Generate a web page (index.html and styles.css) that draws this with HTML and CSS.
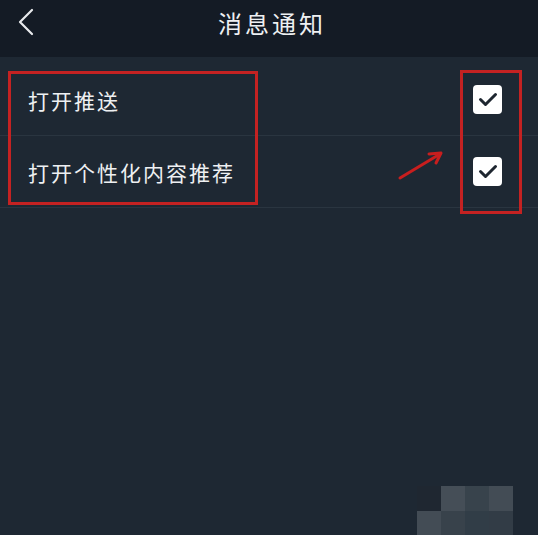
FILE: index.html
```html
<!DOCTYPE html>
<html lang="zh">
<head>
<meta charset="utf-8">
<link rel="stylesheet" href="styles.css">
</head>
<body>
<div class="screen">
  <header class="topbar">
    <svg class="back" width="20" height="30" viewBox="0 0 20 30"><path d="M16 3 L4 15 L16 27" fill="none" stroke="#e8eaec" stroke-width="2.2" stroke-linecap="round" stroke-linejoin="round"/></svg>
    <h1 class="title">消息通知</h1>
  </header>
  <main class="list">
    <div class="row">
      <span class="label">打开推送</span>
      <span class="check"><svg width="20" height="15" viewBox="0 0 20 15"><path d="M2.5 7.5 L7.5 12.5 L17.5 2.5" fill="none" stroke="#1e2630" stroke-width="3" stroke-linecap="round" stroke-linejoin="round"/></svg></span>
    </div>
    <div class="row">
      <span class="label">打开个性化内容推荐</span>
      <span class="check"><svg width="20" height="15" viewBox="0 0 20 15"><path d="M2.5 7.5 L7.5 12.5 L17.5 2.5" fill="none" stroke="#1e2630" stroke-width="3" stroke-linecap="round" stroke-linejoin="round"/></svg></span>
    </div>
  </main>
  <div class="mark mark-left"></div>
  <div class="mark mark-right"></div>
  <svg class="arrow" width="50" height="34" viewBox="0 0 50 34"><path d="M4 30 L44 6" stroke="#c81e1e" stroke-width="3" stroke-linecap="round"/><path d="M33 6 L45 5 L40 15" fill="none" stroke="#c81e1e" stroke-width="3" stroke-linecap="round" stroke-linejoin="round"/></svg>
  <div class="mosaic">
    <i class="c1"></i><i class="c2"></i><i class="c3"></i><i class="c4"></i>
    <i class="c5"></i><i class="c6"></i><i class="c7"></i><i class="c8"></i>
  </div>
</div>
</body>
</html>
```
FILE: styles.css
```css
* { box-sizing: border-box; margin: 0; padding: 0; }
html, body { width: 538px; height: 535px; overflow: hidden; background: #1e2833; }
body { font-family: "Noto Sans CJK SC", "Noto Sans", sans-serif; color: #eef0f2; }
.screen { position: relative; width: 538px; height: 535px; background: #1e2833; }
.topbar {
  height: 57px;
  background: #141b25;
  display: flex;
  align-items: center;
  justify-content: center;
  position: relative;
}
.back { position: absolute; left: 16px; top: 7px; }
.title { font-size: 24px; font-weight: 400; letter-spacing: 3px; color: #eef0f2; margin-top: -12px; margin-left: 6px; }
.list { padding-top: 7px; }
.row {
  height: 72px;
  display: flex;
  align-items: center;
  justify-content: space-between;
  padding: 0 36px 0 28px;
  border-bottom: 1px solid #2a3540;
}
.label { font-size: 21px; letter-spacing: 2px; color: #eef0f2; }
.check {
  width: 29px; height: 29px;
  background: #ffffff;
  border-radius: 4px;
  display: flex;
  align-items: center;
  justify-content: center;
}
.mark { position: absolute; border: 3px solid #c42222; }
.mark-left { left: 8px; top: 71px; width: 250px; height: 134px; }
.mark-right { left: 460px; top: 70px; width: 62px; height: 144px; }
.arrow { position: absolute; left: 396px; top: 148px; }
.mosaic {
  position: absolute; left: 417px; top: 486px;
  display: grid; grid-template-columns: repeat(4, 24px); grid-template-rows: repeat(2, 25px);
}
.mosaic i { display: block; }
.c1 { background: #1f2731; }
.c2 { background: #454e57; }
.c3 { background: #38434c; }
.c4 { background: #434c55; }
.c5 { background: #434c55; }
.c6 { background: #38424b; }
.c7 { background: #313d47; }
.c8 { background: #323c46; }
```
